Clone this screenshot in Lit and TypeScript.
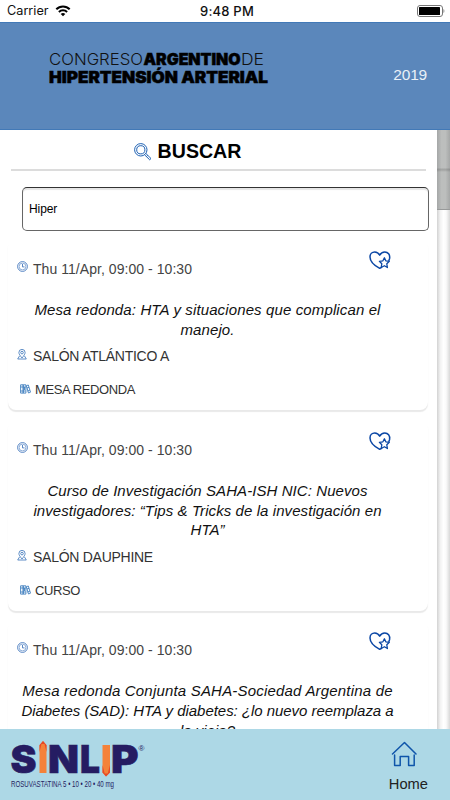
import { LitElement, html, css, svg } from "lit";
import { customElement, property } from "lit/decorators.js";

interface Session {
  time: string;
  title: { text: string; spacing: number }[];
  room: string;
  kind: string;
}

const sessions: Session[] = [
  {
    time: "Thu 11/Apr, 09:00 - 10:30",
    title: [
      { text: "Mesa redonda: HTA y situaciones que complican el", spacing: 0.125 },
      { text: "manejo.", spacing: 0.1 },
    ],
    room: "SALÓN ATLÁNTICO A",
    kind: "MESA REDONDA",
  },
  {
    time: "Thu 11/Apr, 09:00 - 10:30",
    title: [
      { text: "Curso de Investigación SAHA-ISH NIC: Nuevos", spacing: 0.08 },
      { text: "investigadores: “Tips & Tricks de la investigación en", spacing: 0.08 },
      { text: "HTA”", spacing: 0 },
    ],
    room: "SALÓN DAUPHINE",
    kind: "CURSO",
  },
  {
    time: "Thu 11/Apr, 09:00 - 10:30",
    title: [
      { text: "Mesa redonda Conjunta SAHA-Sociedad Argentina de", spacing: 0.19 },
      { text: "Diabetes (SAD): HTA y diabetes: ¿lo nuevo reemplaza a", spacing: -0.04 },
      { text: "lo viejo?", spacing: 0 },
    ],
    room: "SALÓN PACÍFICO",
    kind: "MESA REDONDA",
  },
];

const wifi = html`<svg width="16" height="12" viewBox="0 0 16 12" fill="none" stroke="#000" stroke-width="2">
  <path d="M1.3 4.3C5 .5 11 .5 14.7 4.3" />
  <path d="M3.9 7C6.200 4.700 9.800 4.700 12.100 7" />
  <path d="M8 11.300L5.700 9C7 7.800 9 7.800 10.300 9Z" fill="#000" stroke="none" />
</svg>`;

const battery = html`<svg width="28" height="12" viewBox="0 0 28 12">
  <rect x=".5" y=".5" width="25" height="11" rx="2.500" fill="#fff" stroke="#777" />
  <rect x="2" y="2" width="21" height="8" rx=".6" fill="#000" />
  <path d="M26.500 4v4c1.200-.5 1.200-3.500 0-4z" fill="#777" />
</svg>`;

const magnifier = html`<svg width="18" height="18" viewBox="0 0 18 18" fill="none" stroke="#1f62b4" stroke-width="1">
  <circle cx="6.800" cy="6.800" r="6.200" />
  <circle cx="6.800" cy="6.800" r="4.100" />
  <path d="M10.700 11.900l5 4.900 1.300-1.300-5-4.900M12.500 13.500l1.200-1.200" />
</svg>`;

const clock = html`<svg width="11" height="11" viewBox="0 0 11 11" fill="none" stroke="#4478bd">
  <circle cx="5.500" cy="5.500" r="4.900" stroke-width=".9" />
  <circle cx="5.500" cy="5.500" r="3.400" stroke-width=".6" />
  <path d="M5.500 3v2.900h2" stroke-width=".9" />
</svg>`;

const pin = html`<svg width="10" height="11" viewBox="0 0 10 11" fill="none" stroke="#4c80c0" stroke-width=".9">
  <path d="M5 9C3 6.500 1.900 5 1.900 3.500a3.100 3.100 0 0 1 6.200 0C8.100 5 7 6.500 5 9z" />
  <circle cx="5" cy="3.600" r="1.300" />
  <path d="M2.500 7L.7 10h8.600L7.500 7" />
</svg>`;

const books = html`<svg width="11" height="10" viewBox="0 0 11 10" fill="none" stroke="#4280c0" stroke-width=".9">
  <path d="M.6.8h2.600v8.300H.6zM3.200.8h2.700v8.300H3.200zM.6 3h5M.6 7h5M4.500 3v3" />
  <path d="M6.300 1.700l2-.7 2.200 7.200-2 .8zM7 4l2-.7M7.500 7l2.300-.8" />
</svg>`;

const heart = html`<svg width="22" height="19" viewBox="0 0 22 19" fill="none" stroke="#0b47a5" stroke-width="1.500" stroke-linejoin="round" stroke-linecap="round">
  <path d="M12.500 16.300L10.700 17.300C8.500 16.100 1 11.500 1 5.900C1 3 3.200 1 5.700 1C8 1 9.700 2.300 10.700 4.200C11.700 2.300 13.400 1 15.800 1C19 1 21.200 3.700 20.600 7.400L19.900 9.500" />
  <path d="M15.400 6.800l1.400 3 3.500.5-2.500 2.500.6 3.700-3-1.800-3.200 1.800.6-3.700-2.400-2.500 3.500-.5z" stroke-width="1.300" />
</svg>`;

const home = html`<svg width="26" height="26" viewBox="0 0 26 26" fill="none" stroke="#0f55aa" stroke-width="1.500" stroke-linecap="round" stroke-linejoin="round">
  <path d="M1.500 13L13.500 1.500 25 13" />
  <path d="M3.600 14v10.500h5.600v-9h8.400v9h5.600V14" />
</svg>`;

const congressLogo = html`<svg class="congress" width="222" height="38" viewBox="0 0 222 38">
  <text x="0" y="14.800" class="thin" textLength="94" lengthAdjust="spacingAndGlyphs">CONGRESO</text>
  <text x="94.500" y="14.800" class="heavy" textLength="97" lengthAdjust="spacingAndGlyphs">ARGENTINO</text>
  <text x="192" y="14.800" class="thin" textLength="23" lengthAdjust="spacingAndGlyphs">DE</text>
  <text x="0" y="33" class="heavy" textLength="219" lengthAdjust="spacingAndGlyphs">HIPERTENSIÓN ARTERIAL</text>
</svg>`;

const letter = (ch: string, x: number, w: number) =>
  svg`<text class="brand" x=${x} y="33" textLength=${w} lengthAdjust="spacingAndGlyphs">${ch}</text>`;

const sponsorLogo = html`<svg class="sponsor" width="140" height="54" viewBox="0 0 140 54">
  ${letter("S", -0.5, 26)}${letter("N", 37, 31)}${letter("L", 69, 20)}${letter("P", 100, 27.5)}
  <path d="M28.500 33V5.500L32 1l3.500 4.500V33z" fill="#f4823a" />
  <path d="M28.500 12V5L32 1l3.500 4V12l-2-8h-3z" fill="#e64a28" />
  <path d="M91.500 5h7.500v27.500L95 36.500l-3.500-4z" fill="#f4823a" />
  <path d="M91.500 25v7.500l3.500 4 4-4V25l-2.300 8.500h-3z" fill="#e64a28" />
  <text x="127.500" y="10.500" class="reg">®</text>
  <text x="0" y="47" class="dose" textLength="103" lengthAdjust="spacingAndGlyphs">ROSUVASTATINA 5 • 10 • 20 • 40 mg</text>
</svg>`;

@customElement("session-card")
class SessionCard extends LitElement {
  @property({ attribute: false }) session!: Session;

  static styles = css`
    :host {
      display: block;
      box-sizing: border-box;
      padding: 12px 30px 10px 9px;
      margin-bottom: 9.500px;
      border-radius: 8px;
      background: #fff;
      box-shadow: 0 2px 1px #e9e9e9;
    }
    .top {
      display: flex;
      justify-content: space-between;
      align-items: flex-start;
      height: 49.300px;
    }
    .heart { display: flex; padding: 0 7px 0 0; }
    .row {
      display: flex;
      align-items: center;
      height: 20px;
      font-size: 14px;
      line-height: 20px;
      color: #333;
      white-space: nowrap;
    }
    .time { margin-top: 8px; gap: 5px; color: #444; letter-spacing: 0.050px; }
    .time svg { margin-bottom: 5px; }
    .title {
      font-size: 15px;
      font-style: italic;
      line-height: 19.700px;
      color: #111;
      text-align: center;
      white-space: nowrap;
    }
    .room { margin-top: 6.500px; gap: 6px; letter-spacing: -0.270px; }
    .room svg { margin-bottom: 3px; }
    .kind { margin-top: 14px; padding-left: 3px; gap: 4px; font-size: 13px; letter-spacing: -0.400px; }
    .kind svg { margin-bottom: 2px; }
  `;

  render() {
    const s = this.session;
    return html`
      <div class="top">
        <div class="row time">${clock}<span>${s.time}</span></div>
        <div class="heart">${heart}</div>
      </div>
      <div class="title">
        ${s.title.map((l) => html`<div style="letter-spacing:${l.spacing}px">${l.text}</div>`)}
      </div>
      <div class="row room">${pin}<span>${s.room}</span></div>
      <div class="row kind">${books}<span>${s.kind}</span></div>
    `;
  }
}

@customElement("app-root")
class AppRoot extends LitElement {
  static styles = css`
    :host {
      display: flex;
      flex-direction: column;
      width: 450px;
      height: 800px;
      overflow: hidden;
      background: #fff;
      font-family: "Liberation Sans", Arial, sans-serif;
    }
    .status {
      display: grid;
      grid-template-columns: 1fr auto 1fr;
      align-items: center;
      flex: none;
      height: 22px;
      box-sizing: border-box;
      padding: 0 5px 0 7px;
      font: 13px/22px Inter, sans-serif;
      color: #111;
    }
    .carrier { display: flex; align-items: center; gap: 6px; font-size: 12.700px; }
    .clock { font-weight: 500; letter-spacing: 0.200px; padding-left: 2px; }
    .battery { display: flex; justify-content: flex-end; }
    .banner {
      display: flex;
      justify-content: space-between;
      flex: none;
      height: 108px;
      box-sizing: border-box;
      padding: 27px 23px 0 49px;
      background: #5b87bb;
      border-top: 1px solid #4279b7;
      border-bottom: 1px solid #4279b7;
    }
    .congress { font-family: Inter, sans-serif; font-size: 16px; overflow: visible; }
    .thin { font-weight: 300; fill: #111; }
    .heavy { font-weight: 900; fill: #000; stroke: #000; stroke-width: 0.500px; }
    .year { margin-top: 15px; font-size: 15.500px; line-height: 20px; letter-spacing: -0.200px; color: #e9f0f7; }
    .body { display: flex; flex: 1; min-height: 0; }
    .page { width: 437px; flex: none; overflow: hidden; }
    .heading {
      display: flex;
      justify-content: center;
      gap: 6px;
      height: 41px;
      box-sizing: border-box;
      margin: 0 11px;
      padding: 10px 62px 0 0;
      border-bottom: 2px solid #dcdcdc;
    }
    .heading svg { margin-top: 3px; }
    .heading h1 { margin: 0; font-size: 19.600px; line-height: 23px; font-weight: 700; }
    .search {
      height: 44px;
      box-sizing: border-box;
      margin: 16px 8px 8px 22px;
      padding: 0 6px;
      border: 1px solid #666;
      border-top-color: #333;
      border-radius: 5px;
      box-shadow: inset 0 2px 1px #e6e6e6;
      font-size: 12px;
      letter-spacing: -0.100px;
      line-height: 42px;
      color: #000;
    }
    .cards { padding: 0 9px 0 8px; }
    .rail { flex: 1; display: flex; flex-direction: column; }
    .thumb {
      height: 80px;
      background: linear-gradient(#0000 38px, #0002 39px, #0002 40px, #0000 42px),
        linear-gradient(90deg, #a5a7a7, #bcbebd 35%, #bcbebd 65%, #a5a7a7);
      border-bottom: 1px solid #989a9a;
      box-sizing: border-box;
    }
    .track { flex: 1; background: linear-gradient(90deg, #d2d2d2, #f2f2f2 25%, #fff 50%, #fafafa 70%, #d8d8d8); }
    .footer {
      display: flex;
      justify-content: space-between;
      flex: none;
      height: 71px;
      box-sizing: border-box;
      padding: 11px 22px 0 11px;
      background: #add8e6;
    }
    .sponsor { overflow: visible; }
    .brand { font: 900 38.500px Inter, sans-serif; fill: #251c62; stroke: #251c62; stroke-width: 0.600px; }
    .reg { font: 8px "Liberation Sans", sans-serif; fill: #251c62; }
    .dose { font: 9.500px "Liberation Sans", sans-serif; fill: #251c62; }
    .home { display: flex; flex-direction: column; align-items: center; font-size: 14.700px; line-height: 20px; color: #222; }
    .home svg { margin: 1px 8px 7px 0; }
  `;

  render() {
    return html`
      <div class="status">
        <div class="carrier"><span>Carrier</span>${wifi}</div>
        <div class="clock">9:48 PM</div>
        <div class="battery">${battery}</div>
      </div>
      <div class="banner">${congressLogo}<div class="year">2019</div></div>
      <div class="body">
        <div class="page">
          <div class="heading">${magnifier}<h1>BUSCAR</h1></div>
          <div class="search">Hiper</div>
          <div class="cards">
            ${sessions.map((s) => html`<session-card .session=${s}></session-card>`)}
          </div>
        </div>
        <div class="rail"><div class="thumb"></div><div class="track"></div></div>
      </div>
      <div class="footer">
        ${sponsorLogo}
        <div class="home">${home}<span>Home</span></div>
      </div>
    `;
  }
}
